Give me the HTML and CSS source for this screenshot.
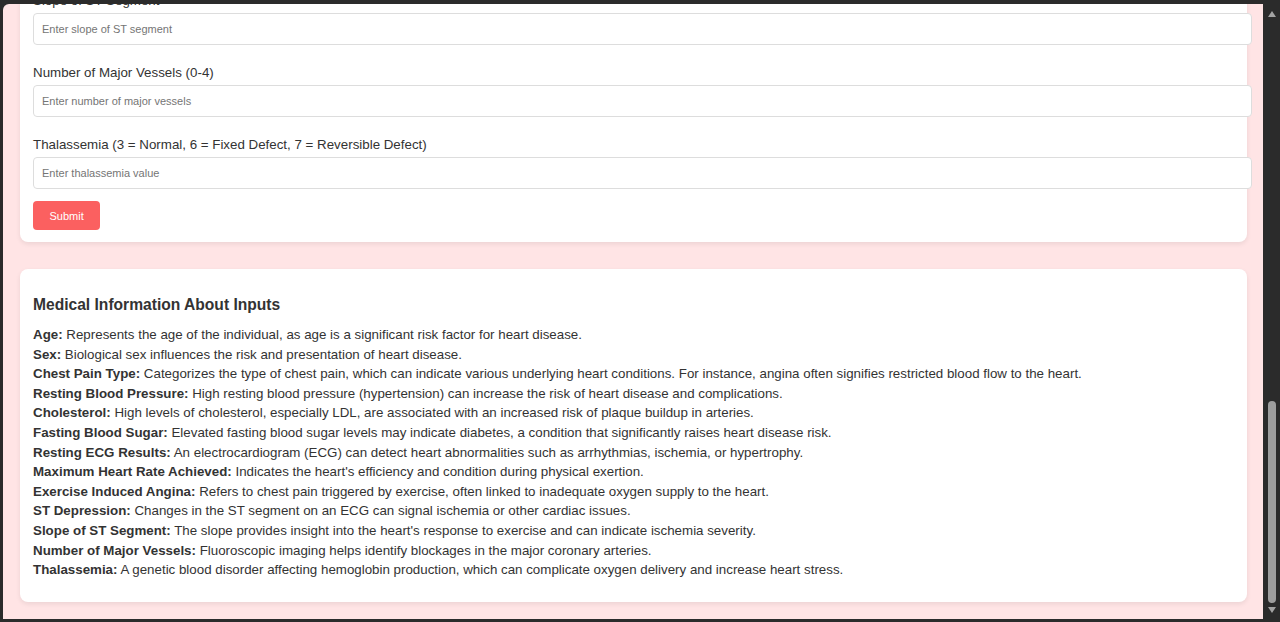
FILE: index.html
```html
<!DOCTYPE html>
<html lang="en">
<head>
<meta charset="utf-8">
<title>Heart Disease Prediction</title>
<link rel="stylesheet" href="styles.css">
</head>
<body>
<div class="window">
  <div class="viewport">
    <div class="page">
      <form class="card form-card">
        <div class="field">
          <label class="label" for="slope">Slope of ST Segment</label>
          <input class="input" id="slope" type="text" placeholder="Enter slope of ST segment">
        </div>
        <div class="field">
          <label class="label" for="ca">Number of Major Vessels (0-4)</label>
          <input class="input" id="ca" type="text" placeholder="Enter number of major vessels">
        </div>
        <div class="field">
          <label class="label" for="thal">Thalassemia (3 = Normal, 6 = Fixed Defect, 7 = Reversible Defect)</label>
          <input class="input" id="thal" type="text" placeholder="Enter thalassemia value">
        </div>
        <div class="actions">
          <button class="submit" type="button">Submit</button>
        </div>
      </form>

      <section class="card info-card">
        <h3 class="info-title">Medical Information About Inputs</h3>
        <div class="info-list">
          <p class="info-item"><strong>Age:</strong> Represents the age of the individual, as age is a significant risk factor for heart disease.</p>
          <p class="info-item"><strong>Sex:</strong> Biological sex influences the risk and presentation of heart disease.</p>
          <p class="info-item"><strong>Chest Pain Type:</strong> Categorizes the type of chest pain, which can indicate various underlying heart conditions. For instance, angina often signifies restricted blood flow to the heart.</p>
          <p class="info-item"><strong>Resting Blood Pressure:</strong> High resting blood pressure (hypertension) can increase the risk of heart disease and complications.</p>
          <p class="info-item"><strong>Cholesterol:</strong> High levels of cholesterol, especially LDL, are associated with an increased risk of plaque buildup in arteries.</p>
          <p class="info-item"><strong>Fasting Blood Sugar:</strong> Elevated fasting blood sugar levels may indicate diabetes, a condition that significantly raises heart disease risk.</p>
          <p class="info-item"><strong>Resting ECG Results:</strong> An electrocardiogram (ECG) can detect heart abnormalities such as arrhythmias, ischemia, or hypertrophy.</p>
          <p class="info-item"><strong>Maximum Heart Rate Achieved:</strong> Indicates the heart's efficiency and condition during physical exertion.</p>
          <p class="info-item"><strong>Exercise Induced Angina:</strong> Refers to chest pain triggered by exercise, often linked to inadequate oxygen supply to the heart.</p>
          <p class="info-item"><strong>ST Depression:</strong> Changes in the ST segment on an ECG can signal ischemia or other cardiac issues.</p>
          <p class="info-item"><strong>Slope of ST Segment:</strong> The slope provides insight into the heart's response to exercise and can indicate ischemia severity.</p>
          <p class="info-item"><strong>Number of Major Vessels:</strong> Fluoroscopic imaging helps identify blockages in the major coronary arteries.</p>
          <p class="info-item"><strong>Thalassemia:</strong> A genetic blood disorder affecting hemoglobin production, which can complicate oxygen delivery and increase heart stress.</p>
        </div>
      </section>
    </div>
  </div>
  <div class="scrollbar">
    <div class="arrow arrow-up"></div>
    <div class="track"><div class="thumb"></div></div>
    <div class="arrow arrow-down"></div>
  </div>
</div>
</body>
</html>
```

FILE: styles.css
```css
html, body {
  margin: 0;
  padding: 0;
  height: 622px;
  overflow: hidden;
  background: #2b2b2b;
}

.window {
  display: flex;
  height: 622px;
  box-sizing: border-box;
  padding: 4px 0 3px 3px;
}

.viewport {
  flex: 1;
  overflow: hidden;
  background: #ffe4e5;
  border-top-left-radius: 6px;
  font-family: "Liberation Sans", Arial, sans-serif;
  font-size: 13.33px;
  color: #333;
}

.page {
  padding: 0 16px 16px 17px;
}

.card {
  background: #fff;
  border-radius: 8px;
  box-shadow: 0 2px 5px rgba(0, 0, 0, 0.08);
  padding: 13px;
}

.form-card {
  margin-top: -32px;
  padding-bottom: 12px;
  display: flex;
  flex-direction: column;
  gap: 12px;
}

.field {
  display: flex;
  flex-direction: column;
}

.label {
  display: block;
  padding-top: 7px;
  line-height: 17px;
  margin-bottom: 4px;
  color: #333;
}

.input {
  width: 100%;
  box-sizing: content-box;
  padding: 8px;
  border: 1px solid #ddd;
  border-radius: 4px;
  font-family: "Liberation Sans", Arial, sans-serif;
  font-size: 11px;
  line-height: 14px;
  color: #333;
  background: #fff;
  margin: 0;
  outline: none;
}

.input::placeholder {
  color: #757575;
}

.actions {
  display: flex;
}

.submit {
  background: #fb6060;
  color: #fff;
  border: 0;
  border-radius: 4px;
  padding: 0 16.5px;
  height: 29px;
  font-family: "Liberation Sans", Arial, sans-serif;
  font-size: 11px;
  cursor: pointer;
}

.info-card {
  margin-top: 27px;
}

.info-title {
  margin: 14px 0 11px;
  font-size: 15.6px;
  line-height: 18px;
  font-weight: bold;
  color: #333;
}

.info-list {
  margin-bottom: 9px;
}

.info-item {
  margin: 0;
  line-height: 19.6px;
}

.info-item strong {
  color: #333;
}

.scrollbar {
  width: 17px;
  display: flex;
  flex-direction: column;
  align-items: center;
  background: #2b2b2b;
}

.arrow {
  width: 0;
  height: 0;
  border-left: 4.5px solid transparent;
  border-right: 4.5px solid transparent;
}

.arrow-up {
  margin-top: 7px;
  border-bottom: 6px solid #a3a3a3;
}

.arrow-down {
  margin-bottom: 6px;
  border-top: 6px solid #a3a3a3;
}

.track {
  flex: 1;
  width: 100%;
  display: flex;
  flex-direction: column;
  justify-content: flex-end;
  align-items: center;
  padding-bottom: 4px;
}

.thumb {
  width: 8px;
  height: 202px;
  background: #9e9e9e;
  border-radius: 4px;
}
```
